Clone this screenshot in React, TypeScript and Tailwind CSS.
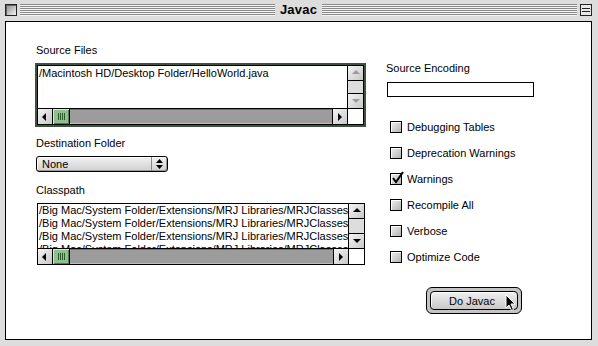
import React from "react";

const label = "text-[11px] leading-[12px] text-black";

function Stripes({ className }: { className: string }) {
  return (
    <div
      className={`h-[12px] bg-[repeating-linear-gradient(to_bottom,#8a8a8a_0px,#8a8a8a_1px,#f4f4f4_1px,#f4f4f4_2px)] ${className}`}
    />
  );
}

function TitleBar() {
  return (
    <div className="h-[21px] flex items-center pl-[5px] pr-[6px] pb-[1px] bg-[#dddddd]">
      <div className="w-[12px] h-[12px] border border-[#222] bg-[linear-gradient(135deg,#8a8a8a,#f2f2f2)] shadow-[inset_1px_1px_0_#666]" />
      <Stripes className="flex-1 ml-[3px]" />
      <div className="px-[5px] text-[13px] leading-[14px] font-bold text-black tracking-[0.2px]">Javac</div>
      <Stripes className="flex-1 mr-[3px]" />
      <div className="w-[12px] h-[12px] border border-[#222] bg-[#e8e8e8] flex flex-col justify-center gap-[2px] px-[1px]">
        <div className="h-[1px] bg-[#222]" />
        <div className="h-[1px] bg-[#222]" />
      </div>
    </div>
  );
}

function Arrow({ dir, active = true }: { dir: "left" | "right" | "up" | "down"; active?: boolean }) {
  const c = active ? "#000" : "#9a9a9a";
  const pts = {
    left: "6,1 2,5 6,9",
    right: "3,1 7,5 3,9",
    up: "1,6 5,2 9,6",
    down: "1,3 5,7 9,3",
  }[dir];
  const vertical = dir === "up" || dir === "down";
  const border = {
    left: "border-r",
    right: "border-l",
    up: "border-b",
    down: "border-t",
  }[dir];
  return (
    <div
      className={`${vertical ? "h-[15px] w-full" : "w-[15px] h-full"} ${border} border-black bg-[linear-gradient(135deg,#f4f4f4,#c8c8c8)] flex items-center justify-center shrink-0`}
    >
      <svg width="10" height="10" viewBox="0 0 10 10">
        <polygon points={pts} fill={c} />
      </svg>
    </div>
  );
}

function HScroll() {
  return (
    <div className="flex-1 h-full flex">
      <Arrow dir="left" />
      <div className="w-[17px] h-full border-r border-black bg-[#8fc08f] flex items-center justify-center gap-[1px] shadow-[inset_1px_1px_0_#d4ecd4,inset_-1px_-1px_0_#4f7f4f]">
        {[0, 1, 2, 3].map((i) => (
          <div key={i} className="w-[1px] h-[7px] bg-[#2f5a2f]" />
        ))}
      </div>
      <div className="flex-1 h-full bg-[#9c9c9c] shadow-[inset_0_1px_0_#6f6f6f,inset_0_-1px_0_#bdbdbd]" />
      <Arrow dir="right" />
    </div>
  );
}

function VScroll({ active }: { active: boolean }) {
  return (
    <div className="w-[16px] h-full border-l border-black flex flex-col">
      <Arrow dir="up" active={active} />
      <div className="flex-1 bg-[#dddddd]" />
      <Arrow dir="down" active={active} />
    </div>
  );
}

function Checkbox({ text, checked = false }: { text: string; checked?: boolean }) {
  return (
    <div className="h-[26px] flex items-center">
      <div className="relative w-[12px] h-[12px] border border-black bg-[linear-gradient(135deg,#f0f0f0,#b4b4b4)] shadow-[inset_1px_1px_0_#fff]">
        {checked && (
          <svg className="absolute left-[0px] top-[-3px]" width="13" height="14" viewBox="0 0 13 14">
            <path d="M2 7 L5 11 L12 1" fill="none" stroke="#000" strokeWidth="2" />
          </svg>
        )}
      </div>
      <span className={`${label} ml-[5px]`}>{text}</span>
    </div>
  );
}

const classpath = "/Big Mac/System Folder/Extensions/MRJ Libraries/MRJClasses/MRJClasses.zip";

export default function App() {
  return (
    <div className="w-[598px] h-[346px] bg-[#dddddd] flex flex-col font-['Liberation_Sans',Arial,sans-serif] overflow-hidden">
      <TitleBar />
      <div className="flex-1 flex pl-[5px] pr-[6px] pb-[6px]">
        <div className="flex-1 border border-black bg-white flex">
          {/* left column */}
          <div className="w-[331px] ml-[29px] pt-[22px] flex flex-col">
            <div className={`${label} pl-[1px]`}>Source Files</div>
            <div className="mt-[7px] h-[64px] border-2 border-[#3e523e]">
              <div className="h-full border border-black flex flex-col">
                <div className="flex-1 flex">
                  <div className={`flex-1 pl-[1px] pt-[1px] ${label} whitespace-nowrap overflow-hidden`}>
                    /Macintosh HD/Desktop Folder/HelloWorld.java
                  </div>
                  <VScroll active={false} />
                </div>
                <div className="h-[16px] flex border-t border-black">
                  <HScroll />
                  <div className="w-[16px] h-full border-l border-black bg-white" />
                </div>
              </div>
            </div>

            <div className={`${label} pl-[1px] mt-[10px]`}>Destination Folder</div>
            <div className="mt-[7px] ml-[1px] w-[132px] h-[16px] border border-black rounded-[3px] flex overflow-hidden bg-[linear-gradient(to_bottom,#f2f2f2,#d0d0d0)] shadow-[inset_1px_1px_0_#fff,inset_-1px_-1px_0_#999]">
              <div className={`flex-1 ${label} pl-[5px] pt-[1px]`}>None</div>
              <div className="w-[16px] border-l border-[#888] flex items-center justify-center">
                <svg width="7" height="10" viewBox="0 0 7 10">
                  <polygon points="0,4 3.5,0 7,4" fill="#000" />
                  <polygon points="0,6 3.5,10 7,6" fill="#000" />
                </svg>
              </div>
            </div>

            <div className={`${label} pl-[1px] mt-[12px]`}>Classpath</div>
            <div className="mt-[7px] ml-[2px] w-[328px] h-[62px] border border-black flex flex-col">
              <div className="flex-1 flex overflow-hidden">
                <div className="flex-1 pl-[1px] overflow-hidden">
                  {[0, 1, 2, 3].map((i) => (
                    <div key={i} className="text-[11px] leading-[13px] whitespace-nowrap">
                      {classpath}
                    </div>
                  ))}
                </div>
                <VScroll active={true} />
              </div>
              <div className="h-[16px] flex border-t border-black">
                <HScroll />
                <div className="w-[16px] h-full border-l border-black bg-white" />
              </div>
            </div>
          </div>

          {/* right column */}
          <div className="ml-[20px] pt-[40px] flex flex-col">
            <div className={label}>Source Encoding</div>
            <div className="mt-[8px] ml-[1px] w-[147px] h-[15px] border border-black bg-white" />
            <div className="mt-[17px] pl-[4px] flex flex-col">
              <Checkbox text="Debugging Tables" />
              <Checkbox text="Deprecation Warnings" />
              <Checkbox text="Warnings" checked />
              <Checkbox text="Recompile All" />
              <Checkbox text="Verbose" />
              <Checkbox text="Optimize Code" />
            </div>
            <div className="mt-[17px] ml-[40px] w-[96px] h-[27px] border border-black rounded-[6px] bg-[#c4c4c4] p-[3px]">
              <div className="relative h-full border border-black rounded-[4px] bg-[linear-gradient(to_bottom,#f0f0f0,#c8c8c8)] shadow-[inset_1px_1px_0_#fff] flex items-center justify-center">
                <span className={`${label} mr-[4px]`}>Do Javac</span>
                <svg className="absolute left-[74px] top-[2px]" width="12" height="18" viewBox="0 0 12 18">
                  <path d="M1 1 L1 14 L4 11 L6.5 16.5 L8.5 15.5 L6 10 L10 10 Z" fill="#000" stroke="#fff" strokeWidth="1" />
                </svg>
              </div>
            </div>
          </div>
        </div>
      </div>
    </div>
  );
}
